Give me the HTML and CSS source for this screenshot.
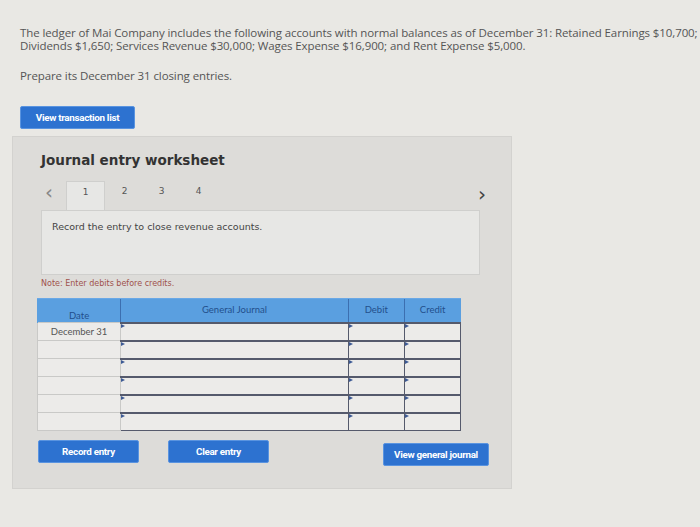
FILE: index.html
```html
<!DOCTYPE html>
<html lang="en">
<head>
    <meta charset="UTF-8">
    <meta name="viewport" content="width=device-width, initial-scale=1.0">
    <title>Journal entry worksheet</title>
    <link rel="stylesheet" href="styles.css">
</head>
<body>
    <!-- Question -->
    <section class="question">
        <p>The ledger of Mai Company includes the following accounts with normal balances as of December 31: Retained Earnings $10,700; Dividends $1,650; Services Revenue $30,000; Wages Expense $16,900; and Rent Expense $5,000.</p>
        <p>Prepare its December 31 closing entries.</p>
        <button class="btn btn-list">View transaction list</button>
    </section>

    <!-- Worksheet -->
    <section class="worksheet">
        <h2>Journal entry worksheet</h2>
        <div class="tabs">
            <span class="arrow">&lsaquo;</span>
            <span class="tab active">1</span>
            <span class="tab">2</span>
            <span class="tab">3</span>
            <span class="tab">4</span>
            <span class="arrow next">&rsaquo;</span>
        </div>
        <div class="tab-body">
            <p>Record the entry to close revenue accounts.</p>
        </div>
        <p class="note">Note: Enter debits before credits.</p>

        <table class="journal">
            <thead>
                <tr>
                    <th class="col-date">Date</th>
                    <th class="col-account">General Journal</th>
                    <th class="col-amount">Debit</th>
                    <th class="col-amount">Credit</th>
                </tr>
            </thead>
            <tbody>
                <tr><td class="date">December 31</td><td class="input"></td><td class="input"></td><td class="input"></td></tr>
                <tr><td class="date"></td><td class="input"></td><td class="input"></td><td class="input"></td></tr>
                <tr><td class="date"></td><td class="input"></td><td class="input"></td><td class="input"></td></tr>
                <tr><td class="date"></td><td class="input"></td><td class="input"></td><td class="input"></td></tr>
                <tr><td class="date"></td><td class="input"></td><td class="input"></td><td class="input"></td></tr>
                <tr><td class="date"></td><td class="input"></td><td class="input"></td><td class="input"></td></tr>
            </tbody>
        </table>

        <div class="actions">
            <button class="btn">Record entry</button>
            <button class="btn btn-clear">Clear entry</button>
            <button class="btn btn-journal">View general journal</button>
        </div>
    </section>
</body>
</html>
```

FILE: styles.css
```css
body {
    font-family: "Open Sans", Lato, sans-serif;
    background-color: #e9e8e4;
    color: #555;
    margin: 0;
    padding: 0;
}
.question {
    padding: 26px 0 0 20px;
    max-width: 678px;
}
.question p {
    margin: 0 0 17px;
    font-size: 11.5px;
    line-height: 13px;
    letter-spacing: -0.1px;
}
.btn {
    font-family: Roboto, sans-serif;
    font-weight: bold;
    font-size: 9.8px;
    letter-spacing: -0.3px;
    color: #fff;
    background-color: #2d72d0;
    border: 1px solid #5a94e0;
    border-radius: 2px;
    width: 101px;
    height: 23px;
    padding: 0;
}
.btn-list {
    width: 115px;
    margin-top: 7px;
}
.worksheet {
    width: 500px;
    margin: 7px 0 0 12px;
    padding: 13px 31px 22px 28px;
    box-sizing: border-box;
    background-color: #dddcd9;
    border: 1px solid #d3d2cf;
    font-family: "DejaVu Sans", Verdana, sans-serif;
}
.worksheet h2 {
    margin: 0;
    font-size: 13.5px;
    line-height: 20px;
    color: #333;
}
.tabs {
    display: flex;
    align-items: stretch;
    height: 29px;
    margin-top: 11px;
    font-size: 9px;
    color: #555;
}
.tabs .arrow {
    font-size: 20px;
    line-height: 22px;
    color: #888;
    width: 21px;
    padding-left: 4px;
}
.tabs .arrow.next {
    margin-left: auto;
    margin-right: -6px;
    width: auto;
    padding: 0;
    color: #444;
    line-height: 26px;
}
.tab {
    width: 37px;
    text-align: center;
    line-height: 21px;
}
.tab.active {
    background-color: #e7e7e5;
    border: 1px solid #cfcfcd;
    border-bottom: none;
    margin-right: 1px;
}
.tab-body {
    height: 63px;
    background-color: #e7e7e5;
    border: 1px solid #cfcfcd;
    padding: 0 10px;
}
.tab-body p {
    margin: 10px 0 0;
    font-size: 9.5px;
    color: #444;
}
.note {
    margin: 4px 0 0;
    font-size: 8px;
    color: #a0524c;
}
.journal {
    margin: 10px 0 0 -4px;
    border-collapse: collapse;
    width: 424px;
    font-family: Lato, "Open Sans", sans-serif;
}
.journal th {
    box-sizing: border-box;
    background-color: #5a9fe0;
    color: #234f8c;
    font-weight: normal;
    font-size: 9.5px;
    line-height: 12px;
    height: 24px;
    padding: 0;
    border-left: 1px solid #3c6fb0;
    border-top: 1px solid #6aa8e6;
}
.journal th.col-date {
    width: 83px;
    vertical-align: bottom;
    padding-bottom: 0;
    border-left: 1px solid #5a9fe0;
}
.journal th.col-account {
    width: 227px;
    vertical-align: top;
    padding-top: 5px;
}
.journal th.col-amount {
    width: 56px;
}
.journal td {
    height: 16px;
    padding: 0;
    background-color: #ecebe9;
}
.journal td.date {
    font-size: 9.5px;
    color: #555;
    text-align: center;
    border: 1px solid #c9c9c7;
}
.journal td.input {
    position: relative;
    border: 1px solid #555a6c;
    border-top-width: 2px;
}
.journal td.input::before {
    content: "";
    position: absolute;
    top: 0;
    left: 0;
    border-top: 2px solid transparent;
    border-bottom: 2px solid transparent;
    border-left: 4px solid #3d5a94;
}
.actions {
    display: flex;
    margin-top: 9px;
    margin-left: -3px;
}
.btn-clear {
    margin-left: 29px;
}
.btn-journal {
    width: 106px;
    margin-left: auto;
    margin-right: -9px;
    margin-top: 3px;
}
```
